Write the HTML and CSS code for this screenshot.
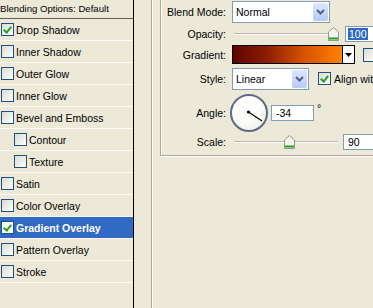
FILE: index.html
```html
<!DOCTYPE html>
<html>
<head>
<meta charset="utf-8">
<link rel="stylesheet" href="styles.css">
</head>
<body>
<div class="list">
  <div class="header">Blending Options: Default</div>
  <div class="item"><span class="cb on"></span>Drop Shadow</div>
  <div class="item"><span class="cb"></span>Inner Shadow</div>
  <div class="item"><span class="cb"></span>Outer Glow</div>
  <div class="item"><span class="cb"></span>Inner Glow</div>
  <div class="item"><span class="cb"></span>Bevel and Emboss</div>
  <div class="item sub"><span class="cb"></span>Contour</div>
  <div class="item sub"><span class="cb"></span>Texture</div>
  <div class="item"><span class="cb"></span>Satin</div>
  <div class="item"><span class="cb"></span>Color Overlay</div>
  <div class="item sel"><span class="cb on"></span>Gradient Overlay</div>
  <div class="item"><span class="cb"></span>Pattern Overlay</div>
  <div class="item"><span class="cb"></span>Stroke</div>
</div>
<div class="pane">
  <div class="outer">
    <div class="inner">
      <div class="row r1">
        <div class="lbl">Blend Mode:</div>
        <div class="select w-blend"><span class="val">Normal</span><span class="btn"><svg width="9" height="6" viewBox="0 0 9 6"><path d="M1 1 L4.5 4.5 L8 1" fill="none" stroke="#4d6185" stroke-width="2"/></svg></span></div>
      </div>
      <div class="row r2">
        <div class="lbl">Opacity:</div>
        <div class="slider"><span class="track"></span><span class="thumb" style="left: 96px"><svg width="11" height="14" viewBox="0 0 11 14"><path d="M0.5 5 L5.5 0.5 L10.5 5 L10.5 13.5 L0.5 13.5 Z" fill="#f4f3ee" stroke="#8e9a8a"/><path d="M1 11.5 H10" stroke="#21a121" stroke-width="2"/></svg></span></div>
        <div class="input w-op-in"><span class="hl">100</span></div>
      </div>
      <div class="row r3">
        <div class="lbl">Gradient:</div>
        <div class="grad"></div>
        <div class="gbtn"><svg width="7" height="4" viewBox="0 0 7 4"><path d="M0 0 H7 L3.5 4 Z" fill="#000"/></svg></div>
        <span class="cb rev"></span>
      </div>
      <div class="row r4">
        <div class="lbl">Style:</div>
        <div class="select w-style"><span class="val">Linear</span><span class="btn"><svg width="9" height="6" viewBox="0 0 9 6"><path d="M1 1 L4.5 4.5 L8 1" fill="none" stroke="#4d6185" stroke-width="2"/></svg></span></div>
        <span class="cb on align"></span><span class="atext">Align wit</span>
      </div>
      <div class="row r5">
        <div class="lbl">Angle:</div>
        <div class="dial"><svg width="38" height="38" viewBox="0 0 38 38"><line x1="18.5" y1="18" x2="32" y2="27" stroke="#000" stroke-width="1.2"/><circle cx="18.5" cy="18" r="1.6" fill="#000"/></svg></div>
        <div class="input w-ang">-34</div>
        <span class="deg">°</span>
      </div>
      <div class="row r6">
        <div class="lbl">Scale:</div>
        <div class="slider"><span class="track"></span><span class="thumb" style="left: 52px"><svg width="11" height="14" viewBox="0 0 11 14"><path d="M0.5 5 L5.5 0.5 L10.5 5 L10.5 13.5 L0.5 13.5 Z" fill="#f4f3ee" stroke="#8e9a8a"/><path d="M1 11.5 H10" stroke="#21a121" stroke-width="2"/></svg></span></div>
        <div class="input w-sc-in">90</div>
      </div>
    </div>
  </div>
</div>
</body>
</html>
```

FILE: styles.css
```css
html, body {
  margin: 0;
  padding: 0;
}
body {
  width: 373px;
  height: 308px;
  overflow: hidden;
  background: #ece9d8;
  font-family: "Liberation Sans", Arial, sans-serif;
  font-size: 10.5px;
  color: #000;
  display: flex;
}
.list {
  width: 133px;
  flex: none;
  border-right: 1px solid #000;
  background: #ece9d8;
}
.header {
  height: 18px;
  line-height: 17px;
  font-size: 9.6px;
  border-bottom: 1px solid #5f5d55;
  white-space: nowrap;
  overflow: hidden;
}
.item {
  height: 21px;
  border-bottom: 1px solid #fbfaf6;
  display: flex;
  align-items: center;
  white-space: nowrap;
  padding-left: 1px;
}
.item.sub {
  padding-left: 14px;
}
.item.sel {
  background: #316ac5;
  color: #fff;
  font-weight: bold;
}
.cb {
  flex: none;
  width: 11px;
  height: 11px;
  border: 1px solid #1c5180;
  background: linear-gradient(135deg, #dcdcd7 0%, #f0f0ea 60%, #fff 100%);
  margin-right: 2px;
  position: relative;
}
.item.sel .cb {
  background: #fff;
}
.cb.on::after {
  content: "";
  position: absolute;
  left: 3px;
  top: 1px;
  width: 3px;
  height: 6px;
  border: solid #21a121;
  border-width: 0 2px 2px 0;
  transform: rotate(40deg);
}
.pane {
  flex: 1;
  padding-left: 17px;
  min-width: 0;
}
.outer {
  height: 308px;
  border-left: 1px solid #aca899;
  box-shadow: inset 1px 0 0 #fff;
  padding-left: 8px;
}
.inner {
  border-left: 1px solid #aca899;
  border-bottom: 1px solid #aca899;
  box-shadow: inset 1px 0 0 #fff, 0 1px 0 #fff;
  padding-bottom: 4px;
  display: flex;
  flex-direction: column;
  overflow: hidden;
}
.row {
  display: flex;
  align-items: center;
  white-space: nowrap;
}
.lbl {
  width: 65px;
  text-align: right;
  flex: none;
  margin-right: 6px;
}
.r1 { height: 23px; }
.r2 { height: 22px; }
.r3 { height: 19px; }
.r4 { height: 29px; }
.r5 { height: 40px; }
.r6 { height: 18px; }
.select {
  box-sizing: border-box;
  height: 22px;
  border: 1px solid #7f9db9;
  background: #fff;
  display: flex;
  align-items: center;
  justify-content: space-between;
  padding: 0 1px 0 3px;
  flex: none;
}
.w-blend { width: 98px; }
.w-style { width: 77px; }
.select .btn {
  width: 15px;
  height: 18px;
  border-radius: 2px;
  background: linear-gradient(#dce7fe, #b7cbf8);
  display: flex;
  align-items: center;
  justify-content: center;
}
.slider {
  position: relative;
  width: 111px;
  height: 16px;
  flex: none;
}
.track {
  position: absolute;
  left: 2px;
  right: 5px;
  top: 7px;
  height: 1px;
  background: #b8b5a6;
  border-bottom: 1px solid #fff;
  border-radius: 1px;
}
.thumb {
  position: absolute;
  top: 1px;
  width: 11px;
  height: 14px;
}
.input {
  box-sizing: border-box;
  height: 16px;
  border: 1px solid #7f9db9;
  background: #fff;
  line-height: 14px;
  padding-left: 2px;
  flex: none;
}
.w-op-in { width: 40px; margin-left: 2px; }
.w-ang { width: 43px; margin-left: 3px; padding-left: 4px; }
.w-sc-in { width: 40px; padding-left: 4px; }
.hl {
  background: #316ac5;
  color: #fff;
  padding: 0 1px;
}
.grad {
  box-sizing: border-box;
  width: 111px;
  height: 19px;
  border: 1px solid #000;
  background: linear-gradient(to right, #5c0500 0%, #8a1d00 30%, #d55200 65%, #ff8200 100%);
  flex: none;
}
.gbtn {
  box-sizing: border-box;
  width: 12px;
  height: 19px;
  border: 1px solid #000;
  border-left: 0;
  background: #fff;
  display: flex;
  align-items: center;
  justify-content: center;
  flex: none;
}
.rev {
  margin-left: 8px;
  width: 12px;
  height: 12px;
}
.align {
  margin-left: 9px;
}
.atext {
  margin-left: 1px;
}
.dial {
  box-sizing: border-box;
  width: 38px;
  height: 38px;
  border: 2px solid #5d6a87;
  border-radius: 50%;
  background: radial-gradient(circle at 35% 30%, #fff 0%, #fbfbf9 50%, #e6e5df 100%);
  position: relative;
  flex: none;
  margin-left: -2px;
}
.dial svg {
  position: absolute;
  left: -2px;
  top: -2px;
}
.deg {
  margin-left: 3px;
  align-self: flex-start;
  margin-top: 9px;
}
```
